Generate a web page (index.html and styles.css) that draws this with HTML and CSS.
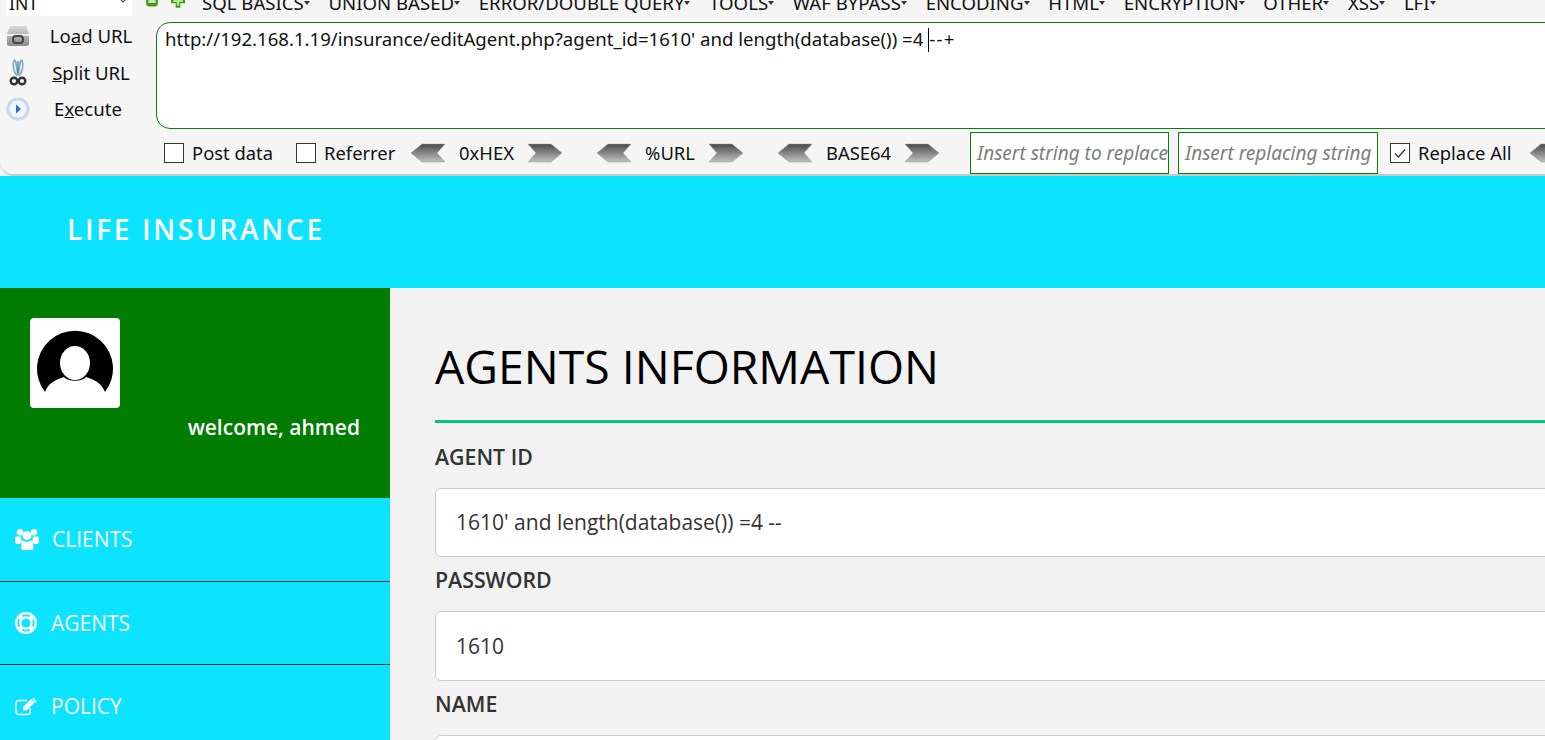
FILE: index.html
```html
<!DOCTYPE html>
<html lang="en">
<head>
<meta charset="utf-8">
<title>Agents Information</title>
<link rel="stylesheet" href="styles.css">
</head>
<body>
<section class="hackbar">
  <div class="menu-row">
    <div class="select"><span class="select-value">INT</span><svg class="chev" viewBox="0 0 10 6" width="10" height="6"><path d="M1 1l4 4 4-4" fill="none" stroke="#555" stroke-width="1.2"/></svg></div>
    <svg class="pm minus" viewBox="0 0 12 12" width="14" height="14"><rect x="1" y="0" width="10" height="9" rx="2.5" fill="#3f9c1c"/><rect x="3" y="3" width="6" height="3" fill="#c9eab0"/></svg>
    <svg class="pm plus" viewBox="0 0 12 12" width="14" height="14"><path d="M4 0h4v3h4v4H8v4H4V7H0V3h4z" fill="#3f9c1c"/><path d="M5 1h2v3h3v2H7v3H5V6H2V4h3z" fill="#b7e59a"/></svg>
    <ul class="menus">
      <li>SQL BASICS</li><li>UNION BASED</li><li>ERROR/DOUBLE QUERY</li><li>TOOLS</li><li>WAF BYPASS</li><li>ENCODING</li><li>HTML</li><li>ENCRYPTION</li><li>OTHER</li><li>XSS</li><li>LFI</li>
    </ul>
  </div>
  <div class="main-row">
    <div class="actions">
      <div class="action">
        <svg class="act-icon" viewBox="0 0 24 22" width="24" height="22"><defs><linearGradient id="gl" x1="0" y1="0" x2="0" y2="1"><stop offset="0" stop-color="#d8d8d8"/><stop offset="1" stop-color="#8a8a8a"/></linearGradient></defs><path d="M4 1h16l3 8v11l-2 1H3l-2-1V9z" fill="url(#gl)"/><rect x="1" y="9" width="22" height="2" fill="#eee"/><rect x="7" y="11" width="10" height="7" rx="3" fill="none" stroke="#444" stroke-width="2"/></svg>
        <span class="act-label">Lo<u>a</u>d URL</span>
      </div>
      <div class="action">
        <svg class="act-icon" viewBox="0 0 24 28" width="24" height="28"><path d="M8 1c-1.500 5-1.500 10 3 16M16 1c1.500 5 1.500 10-3 16M8 1c2 0 2.500 6 3.500 13M16 1c-2 0-2.500 6-3.500 13" fill="none" stroke="#7fb2cc" stroke-width="1.800"/><path d="M12 2v14" stroke="#4f7a90" stroke-width="1.300"/><circle cx="8" cy="22" r="3.300" fill="none" stroke="#333" stroke-width="2.400"/><circle cx="16" cy="22" r="3.300" fill="none" stroke="#333" stroke-width="2.400"/></svg>
        <span class="act-label"><u>S</u>plit URL</span>
      </div>
      <div class="action execute">
        <svg class="act-icon" viewBox="0 0 24 24" width="24" height="24"><circle cx="12" cy="12" r="11.500" fill="#c4d9ef"/><circle cx="12" cy="12" r="8.500" fill="#f1f5fa"/><path d="M10 7.500l5 4.500-5 4.500z" fill="#2f6db0"/></svg>
        <span class="act-label">E<u>x</u>ecute</span>
      </div>
    </div>
    <div class="url-box">http://192.168.1.19/insurance/editAgent.php?agent_id=1610' and length(database()) =4 <span class="caret"></span><span class="tail">--+</span></div>
  </div>
  <div class="option-row">
    <label class="check first"><span class="box"></span>Post data</label>
    <label class="check second"><span class="box"></span>Referrer</label>
    <div class="codec hex">
      <svg class="arrow" viewBox="0 0 34 20" width="34" height="20"><use href="#left-arrow"/></svg><span class="codec-name">0xHEX</span><svg class="arrow" viewBox="0 0 34 20" width="34" height="20"><use href="#right-arrow"/></svg>
    </div>
    <div class="codec url">
      <svg class="arrow" viewBox="0 0 34 20" width="34" height="20"><use href="#left-arrow"/></svg><span class="codec-name">%URL</span><svg class="arrow" viewBox="0 0 34 20" width="34" height="20"><use href="#right-arrow"/></svg>
    </div>
    <div class="codec b64">
      <svg class="arrow" viewBox="0 0 34 20" width="34" height="20"><use href="#left-arrow"/></svg><span class="codec-name">BASE64</span><svg class="arrow" viewBox="0 0 34 20" width="34" height="20"><use href="#right-arrow"/></svg>
    </div>
    <div class="replace-box first-box">Insert string to replace</div>
    <div class="replace-box second-box">Insert replacing string</div>
    <label class="check third"><span class="box"><svg viewBox="0 0 18 18" width="18" height="18"><path d="M4 9.500l3.500 3.500L14 5.500" fill="none" stroke="#333" stroke-width="1.300"/></svg></span>Replace All</label>
    <svg class="arrow" viewBox="0 0 34 20" width="34" height="20"><use href="#left-arrow"/></svg>
  </div>
  <svg class="defs" width="0" height="0">
    <defs>
      <linearGradient id="ag" x1="0" y1="0" x2="0" y2="1"><stop offset="0" stop-color="#4a4a4a"/><stop offset="0.55" stop-color="#8c8c8c"/><stop offset="1" stop-color="#c0c0c0"/></linearGradient>
      <path id="left-arrow" d="M11 1h23l-8 9 8 9H11L0 10z" fill="url(#ag)" stroke="#999" stroke-width=".5"/>
      <path id="right-arrow" d="M0 1h23l11 9-11 9H0l8-9z" fill="url(#ag)" stroke="#999" stroke-width=".5"/>
    </defs>
  </svg>
</section>

<header class="site-header"><span class="brand">LIFE INSURANCE</span></header>

<div class="page">
  <aside class="sidebar">
    <div class="profile">
      <div class="avatar">
        <svg viewBox="0 0 90 90" width="90" height="90"><path d="M15 74A38 38 0 1 1 75 74C72 66 66 62 56 59 52 64 38 64 34 59 24 62 18 66 15 74Z" fill="#000"/><ellipse cx="45" cy="45" rx="15" ry="17" fill="#fff"/></svg>
      </div>
      <p class="welcome">welcome, ahmed</p>
    </div>
    <nav class="nav">
      <a class="nav-item clients">
        <svg class="nav-icon" viewBox="0 0 24 21" width="24" height="21"><g fill="#fff"><circle cx="5" cy="3.200" r="3.200"/><circle cx="19" cy="3.200" r="3.200"/><circle cx="12" cy="6.500" r="4.500"/><path d="M1 7.500h4.500l1.500 5-2 2.500H1.500L0 13.500V9zM23 7.500h-4.500L17 12.500l2 2.500h3.500L24 13.500V9z"/><path d="M7.500 11.500l4.500 1.500 4.500-1.500 1.500 2 .5 6-1 1.500H7l-1-1.500.5-6z"/></g></svg>
        <span>CLIENTS</span>
      </a>
      <a class="nav-item agents">
        <svg class="nav-icon" viewBox="0 0 22 22" width="22" height="22"><circle cx="11" cy="11" r="11" fill="#fff"/><circle cx="11" cy="11" r="4.500" fill="#0be3ff"/><circle cx="11" cy="11" r="7.700" fill="none" stroke="#0be3ff" stroke-width="1.800" stroke-dasharray="7.500 4.595" stroke-dashoffset="3.750"/></svg>
        <span>AGENTS</span>
      </a>
      <a class="nav-item policy">
        <svg class="nav-icon" viewBox="0 0 22 18" width="22" height="18"><path d="M15 10v4a2.500 2.500 0 0 1-2.500 2.500H3.500A2.500 2.500 0 0 1 1 14V5a2.500 2.500 0 0 1 2.500-2.500H12" fill="none" stroke="#fff" stroke-width="1.500"/><path d="M8 9L16 1l3.500 3.500-8 8H8zM17 0l1-.5L21.500 3l-.5 1-1 .500z" fill="#fff"/></svg>
        <span>POLICY</span>
      </a>
    </nav>
  </aside>
  <main class="content">
    <h1 class="title">AGENTS INFORMATION</h1>
    <div class="field">
      <label class="field-label">AGENT ID</label>
      <div class="input">1610' and length(database()) =4 --</div>
    </div>
    <div class="field">
      <label class="field-label second">PASSWORD</label>
      <div class="input tall">1610</div>
    </div>
    <div class="field">
      <label class="field-label third">NAME</label>
      <div class="input"></div>
    </div>
  </main>
</div>
</body>
</html>
```
FILE: styles.css
```css
* { box-sizing: border-box; }
html, body { margin: 0; height: 100%; overflow: hidden; }
body { width: 1545px; height: 740px; background: #f2f2f2; font-family: "Open Sans", sans-serif; color: #333; }

.hackbar { height: 176px; background: #f5f5f5; border-bottom: 2px solid #c9c9c9; border-bottom-left-radius: 14px; font-family: "Noto Sans", sans-serif; color: #111; overflow: hidden; white-space: nowrap; }
.defs { position: absolute; }

.menu-row { height: 28px; display: flex; align-items: flex-start; margin-top: -6px; }
.select { width: 126px; height: 22px; margin-left: 6px; background: #fff; font-size: 17.600px; line-height: 22px; padding-left: 3px; display: flex; justify-content: space-between; align-items: center; flex: none; }
.select-value { margin-bottom: 5px; }
.chev { margin: 0 4px 10px 0; }
.pm { flex: none; }
.pm.minus { margin: 1.500px 0 0 13px; }
.pm.plus { margin: 1px 0 0 12px; }
.menus { list-style: none; display: flex; margin: -2px 0 0 17px; padding: 0; font-size: 18.600px; line-height: 22px; }
.menus li { position: relative; margin-right: 18.700px; padding-right: 6px; flex: none; }
.menus li::after { content: ""; position: absolute; right: 0; top: 9px; border: 3px solid transparent; border-top: 4px solid #333; border-bottom: 0; }

.main-row { display: flex; height: 108px; }
.actions { width: 156px; flex: none; display: flex; flex-direction: column; margin-top: -4px; }
.action { height: 36.500px; display: flex; align-items: center; font-size: 18.600px; }
.act-icon { margin-left: 6px; flex: none; }
.act-label { flex: 1; text-align: center; padding: 0 4px 1px 0; }
.execute .act-label { padding-right: 10px; }
.url-box { flex: 1; margin-right: -30px; height: 107px; background: #fff; border: 1px solid #0a7d0a; border-radius: 14px; padding: 3px 8px; font-size: 18.600px; line-height: 26px; }
.caret { display: inline-block; width: 1px; height: 24px; background: #000; vertical-align: -6px; }
.tail { letter-spacing: 1.300px; }

.option-row { display: flex; align-items: center; height: 44px; margin-top: 1px; }
.check { display: flex; align-items: center; font-size: 18.400px; flex: none; padding-bottom: 2px; }
.box { width: 20px; height: 20px; border: 1px solid #333; background: #fff; margin: 0 8px -2px 0; flex: none; display: flex; align-items: center; justify-content: center; }
.check.first { margin-left: 164px; width: 132px; }
.check.second { width: 115px; }
.codec { display: flex; align-items: center; justify-content: space-between; font-size: 18.400px; flex: none; }
.codec.hex { width: 151px; }
.codec.url { margin-left: 35px; width: 146px; }
.codec.b64 { margin-left: 35px; width: 161px; }
.codec-name { padding-bottom: 2px; }
.arrow { flex: none; }
.replace-box { height: 42px; flex: none; background: #fff; border: 1px solid #0a7d0a; font-size: 19px; font-style: italic; color: #7d7d7d; line-height: 40px; padding-left: 6px; overflow: hidden; }
.first-box { width: 199px; margin-left: 31px; }
.second-box { width: 200px; margin-left: 9px; }
.check.third { margin-left: 12px; width: 140px; }

.site-header { height: 112px; background: #0be3ff; display: flex; align-items: center; padding-left: 67px; }
.brand { color: #fff; font-size: 28px; letter-spacing: 2.700px; font-weight: 600; margin-top: -6px; }

.page { display: flex; height: 452px; overflow: hidden; }
.sidebar { width: 390px; flex: none; background: #0be3ff; }
.profile { height: 210px; background: #007c00; padding: 30px 30px 0; }
.avatar { width: 90px; height: 90px; background: #fff; border-radius: 4px; }
.avatar svg { display: block; }
.welcome { margin: 5px 0 0; text-align: right; color: #fff; font-size: 21px; font-weight: 600; line-height: 29px; }
.nav-item { display: flex; align-items: center; height: 84px; border-bottom: 1px solid #2c3b40; color: #fff; font-size: 21px; padding-left: 15px; }
.nav-item.agents { height: 83px; }
.nav-item.policy { height: 83px; border-bottom: 0; }
.nav-icon { flex: none; }
.nav-item span { padding-bottom: 2px; }
.nav-item.agents span { padding-bottom: 0; }
.clients span { margin-left: 13px; }
.agents span { margin-left: 14px; }
.policy span { margin-left: 14px; }

.content { flex: 1; padding: 0 0 0 45px; min-width: 0; }
.title { margin: 0; height: 135px; padding-top: 48px; border-bottom: 3px solid #00c878; color: #000; font-size: 46.400px; line-height: 60px; font-weight: 400; }
.field-label { display: block; height: 65px; padding-top: 20px; font-size: 21.300px; line-height: 28px; font-weight: 600; color: #333; }
.field-label.second { height: 54px; padding-top: 9px; }
.field-label.third { height: 54px; padding-top: 9px; }
.input { height: 69px; margin-right: -10px; background: #fff; border: 1px solid #ccc; border-radius: 6px; padding: 0 20px; font-size: 21px; line-height: 67px; color: #333; }
.input.tall { height: 70px; line-height: 69px; }
```
